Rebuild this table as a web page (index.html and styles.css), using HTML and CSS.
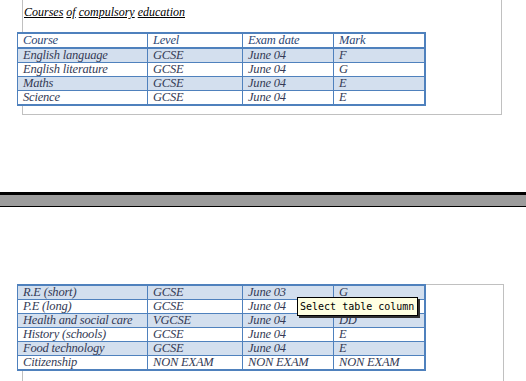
FILE: index.html
```html
<!DOCTYPE html>
<html>
<head>
<meta charset="utf-8">
<link rel="stylesheet" href="styles.css">
</head>
<body>
<div class="page page-top">
  <p class="title"><span>Courses</span> <span>of</span> <span>compulsory</span> <span>education</span></p>
  <table class="grid">
    <colgroup><col class="c1"><col class="c2"><col class="c3"><col class="c4"></colgroup>
    <tr class="head"><td>Course</td><td>Level</td><td>Exam date</td><td>Mark</td></tr>
    <tr class="shade"><td>English language</td><td>GCSE</td><td>June 04</td><td>F</td></tr>
    <tr><td>English literature</td><td>GCSE</td><td>June 04</td><td>G</td></tr>
    <tr class="shade"><td>Maths</td><td>GCSE</td><td>June 04</td><td>E</td></tr>
    <tr><td>Science</td><td>GCSE</td><td>June 04</td><td>E</td></tr>
  </table>
</div>
<div class="separator"></div>
<div class="page page-bottom">
  <table class="grid">
    <colgroup><col class="c1"><col class="c2"><col class="c3"><col class="c4"></colgroup>
    <tr class="shade"><td>R.E (short)</td><td>GCSE</td><td>June 03</td><td>G</td></tr>
    <tr><td>P.E (long)</td><td>GCSE</td><td>June 04</td><td>D</td></tr>
    <tr class="shade"><td>Health and social care</td><td>VGCSE</td><td>June 04</td><td>DD</td></tr>
    <tr><td>History (schools)</td><td>GCSE</td><td>June 04</td><td>E</td></tr>
    <tr class="shade"><td>Food technology</td><td>GCSE</td><td>June 04</td><td>E</td></tr>
    <tr><td>Citizenship</td><td>NON EXAM</td><td>NON EXAM</td><td>NON EXAM</td></tr>
  </table>
  <div class="tooltip">Select table column</div>
</div>
</body>
</html>
```

FILE: styles.css
```css
html, body {
  margin: 0;
  padding: 0;
  background: #fff;
  width: 526px;
  height: 381px;
  overflow: hidden;
}
body {
  font-family: "Liberation Serif", serif;
  position: relative;
}
.page {
  margin-left: 22px;
  width: 480px;
  border: 1px solid #c0c0c0;
}
.page-top {
  border-top: none;
  height: 115px;
  box-sizing: border-box;
  padding-top: 5px;
}
.title {
  margin: 0 0 0 1px;
  font-style: italic;
  font-size: 12px;
  line-height: 14px;
  color: #000;
  height: 27px;
}
.title span {
  text-decoration: underline;
}
.grid {
  margin-left: -6px;
  border-collapse: separate;
  border-spacing: 0;
  border: 2px solid #4f81bd;
  border-left-width: 1.5px;
  background: #fff;
  font-style: italic;
  font-size: 12.5px;
  color: #333a55;
  table-layout: fixed;
  width: 408px;
}
.c1 { width: 130px; }
.c2 { width: 95px; }
.c3 { width: 91px; }
.c4 { width: 90px; }
.grid td {
  height: 13px;
  line-height: 13px;
  padding: 0 5px;
  border-right: 1px solid #4f81bd;
  border-bottom: 1px solid #4f81bd;
  white-space: nowrap;
  overflow: hidden;
  letter-spacing: -0.2px;
}
.grid td:last-child { border-right: none; }
.grid tr:last-child td { border-bottom: none; }
.grid tr.head td {
  border-bottom-width: 2px;
  color: #2d4775;
}
.grid tr.shade td { background: #d3dfee; }
.separator {
  margin-top: 77px;
  border-top: 3px solid #000;
  border-bottom: 1px solid #000;
  height: 11px;
  background: #9c9c9c;
}
.page-bottom {
  margin-top: 77px;
  border-bottom: none;
  height: 100px;
  position: relative;
}
.page-bottom .grid {
  margin-top: -1px;
}
.tooltip {
  position: absolute;
  left: 274px;
  top: 12px;
  width: 121px;
  height: 19px;
  box-sizing: border-box;
  background: #ffffe1;
  border: 1px solid #000;
  box-shadow: 2px 2px 0 #303030;
  font-family: "DejaVu Sans Mono", "Liberation Mono", monospace;
  font-size: 10px;
  line-height: 17px;
  padding-left: 2px;
  color: #000;
  white-space: nowrap;
}
```
